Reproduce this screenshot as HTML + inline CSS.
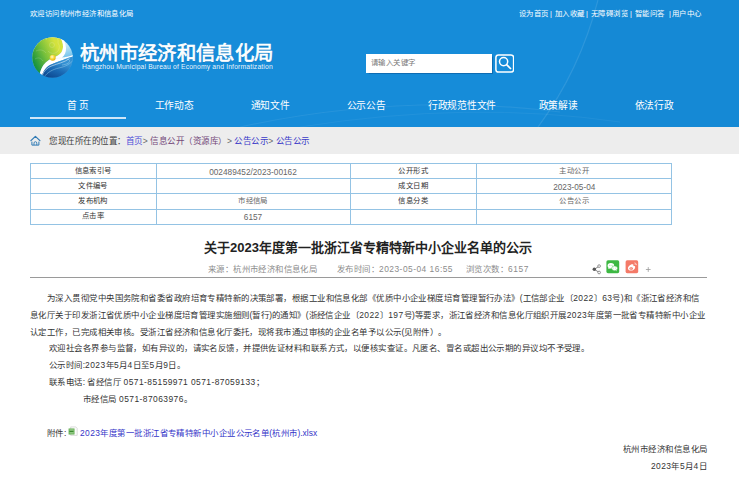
<!DOCTYPE html>
<html lang="zh-CN"><head><meta charset="utf-8">
<style>
*{margin:0;padding:0;box-sizing:border-box}
html,body{width:739px;height:485px;overflow:hidden;background:#fff}
body{position:relative;font-family:"Liberation Sans",sans-serif;color:#333;text-spacing-trim:space-all}
.a{position:absolute}
.t{position:absolute;white-space:nowrap;transform-origin:0 0;transform:scale(var(--k,0.61583))}
.n{letter-spacing:0.05em}
#hd{position:absolute;left:0;top:0;width:739px;height:127px;background:#168cd9;overflow:hidden}
.top{font-size:12px;color:#fff;line-height:16px}
.nav{font-size:16px;color:#fff;line-height:20px;width:calc(96px / var(--k,0.61583));text-align:center;--k:0.607}
#bc{position:absolute;left:0;top:127px;width:739px;height:27px;background:#ededed}
.tb{position:absolute;background:#94c3e4}
.c{font-size:12px;line-height:16px;text-align:center;color:#333}
.v{color:#666}
.d{font-size:13.4px;position:relative;top:2.2px}
.m{top:264px;font-size:14px;line-height:18px;color:#8c8c8c;--k:0.6}
.p{font-size:14px;line-height:20px;color:#333;--k:0.603}
</style></head><body>
<div id="hd">
  <svg class="a" style="left:0;top:0" width="739" height="127">
    <path d="M538 127 Q580 70 598 0" stroke="rgba(255,255,255,0.10)" stroke-width="1.2" fill="none"/>
    <path d="M538 127 Q580 70 598 0 L739 0 L739 127Z" fill="rgba(0,0,0,0.015)"/>
    <path d="M240 127 Q400 92 560 112" stroke="rgba(255,255,255,0.07)" stroke-width="1.2" fill="none"/>
    <path d="M300 127 Q470 100 620 122" stroke="rgba(255,255,255,0.05)" stroke-width="1" fill="none"/>
  </svg>
  <div class="t top" style="left:30px;top:9.3px">欢迎访问杭州市经济和信息化局</div>
  <div class="t top" style="left:518.5px;top:9.3px">设为首页</div>
  <div class="t top" style="left:549.6px;top:9.3px">|</div>
  <div class="t top" style="left:555px;top:9.3px">加入收藏</div>
  <div class="t top" style="left:585.8px;top:9.3px">|</div>
  <div class="t top" style="left:591.2px;top:9.3px">无障碍浏览</div>
  <div class="t top" style="left:629.7px;top:9.3px">|</div>
  <div class="t top" style="left:634.7px;top:9.3px">智能问答</div>
  <div class="t top" style="left:668.6px;top:9.3px">|</div>
  <div class="t top" style="left:672.2px;top:9.3px">用户中心</div>
  <svg class="a" style="left:32px;top:37px" width="41" height="41" viewBox="0 0 41 41">
  <defs>
    <linearGradient id="lg" x1="0.05" y1="0.6" x2="0.75" y2="0.15">
      <stop offset="0" stop-color="#1a9440"/><stop offset="0.5" stop-color="#7cc23c"/><stop offset="1" stop-color="#d4e23e"/>
    </linearGradient>
    <linearGradient id="lb" x1="0.75" y1="0.1" x2="0.9" y2="0.7">
      <stop offset="0" stop-color="#e6f6fc"/><stop offset="0.5" stop-color="#8fd0f0"/><stop offset="1" stop-color="#3d9fe0"/>
    </linearGradient>
    <linearGradient id="ld" x1="0.7" y1="0.3" x2="0.3" y2="1">
      <stop offset="0" stop-color="#3592d4"/><stop offset="0.5" stop-color="#1a6ab4"/><stop offset="1" stop-color="#0d4a92"/>
    </linearGradient>
    <radialGradient id="ly" cx="0.4" cy="0.35" r="0.7">
      <stop offset="0" stop-color="#fffbd8"/><stop offset="0.5" stop-color="#f6d838"/><stop offset="1" stop-color="#e0a812"/>
    </radialGradient>
    <clipPath id="cc"><circle cx="20.5" cy="20.5" r="20.3"/></clipPath>
  </defs>
  <g clip-path="url(#cc)">
    <rect x="0" y="0" width="41" height="41" fill="url(#lb)"/>
    <path d="M0 0 H27 C30 2 31.2 6 31 10 C30.8 14.5 28.5 17.5 24 19.5 C19 21.5 14.5 24 11.5 28 C9.5 31 8.3 34 7.7 37 L7 41 H0Z" fill="url(#lg)"/>
    <path d="M27 0 C30 2 31.2 6 31 10 C30.8 14.5 28.5 17.5 24 19.5 C19 21.5 14.5 24 11.5 28 C9.5 31 8.3 34 7.7 37 L8 41 L9.5 41 C10.5 35 13.5 30.5 18 28 C23 25.3 30 23.5 35 21.2 L41 19.5 L41 18 C37 19.5 33 20.5 30 20.6 C32.8 18.5 34.2 15 34 11 C33.8 6 31.5 2.5 29.5 0Z" fill="#ffffff"/>
    <path d="M9.5 41 C10.5 35 13.5 30.5 18 28 C23 25.3 30 23.5 35 21.2 L41 19.5 V41Z" fill="url(#ld)"/>
    <path d="M10.2 38.5 C12 33.5 15.5 30.5 20 28.8 C26 26.5 32 25.5 37.5 21.5" fill="none" stroke="#ffffff" stroke-width="0.6" opacity="0.85"/>
    <path d="M12 40 C15.5 35.5 20 32.5 27 31 C33 29.7 37.5 27.5 40.5 24" fill="none" stroke="#a8dcf6" stroke-width="0.7" opacity="0.6"/>
    <path d="M24 21.5 C30 20.5 36 21 37.5 23.5 C38.5 25.5 35 27.5 30 28" fill="none" stroke="#d0eefa" stroke-width="0.5" opacity="0.7"/>
    <g fill="none" stroke="#ffffff" stroke-width="0.55" opacity="0.28">
      <path d="M14 3 A6 6 0 0 1 26 6 A6 6 0 0 1 16 14"/>
      <circle cx="20" cy="8" r="2.5"/>
      <path d="M4 14 C8 12 12 13 14 16 M3 22 C6 20 9 21 11 24"/>
    </g>
    <circle cx="20.7" cy="20.8" r="3" fill="url(#ly)"/>
  </g>
</svg>
  <div class="t" style="left:80.3px;top:43px;font-size:31px;line-height:36px;color:#fff;-webkit-text-stroke:1.1px #fff;text-shadow:0 1.5px 1.5px rgba(0,40,90,0.25);--k:0.623">杭州市经济和信息化局</div>
  <div class="t" style="left:82px;top:62.5px;font-size:11px;line-height:12px;color:rgba(255,255,255,0.92);letter-spacing:0.25px">Hangzhou Municipal Bureau of Economy and Informatization</div>
  <div class="a" style="left:365.5px;top:53.5px;width:126.5px;height:19.2px;background:#fff;box-shadow:0.5px 0.5px 1px rgba(0,50,110,0.35)"></div>
  <div class="t" style="left:371px;top:57.5px;font-size:12px;line-height:16px;color:#777">请输入关键字</div>
  <svg class="a" style="left:494.5px;top:54px" width="19.5" height="19" viewBox="0 0 19.5 19">
    <rect x="0.9" y="0.9" width="17.7" height="17.2" rx="2.6" fill="none" stroke="#fff" stroke-width="1.5"/>
    <circle cx="8.6" cy="7.6" r="4.1" fill="none" stroke="#fff" stroke-width="1.5"/>
    <path d="M11.6 10.6 L16 15" stroke="#fff" stroke-width="1.7"/>
  </svg>
  <div class="t nav" style="left:30px;top:99.8px">首&nbsp;页</div>
  <div class="t nav" style="left:126px;top:99.8px">工作动态</div>
  <div class="t nav" style="left:222px;top:99.8px">通知文件</div>
  <div class="t nav" style="left:318px;top:99.8px">公示公告</div>
  <div class="t nav" style="left:414px;top:99.8px">行政规范性文件</div>
  <div class="t nav" style="left:510px;top:99.8px">政策解读</div>
  <div class="t nav" style="left:606px;top:99.8px">依法行政</div>
  <div class="a" style="left:30px;top:117px;width:96px;height:2px;background:#cfe6f8"></div>
</div>
<div id="bc">
  <svg class="a" style="left:29.5px;top:8px" width="11" height="11" viewBox="0 0 11 11">
    <path d="M0.9 5.6 L5.4 1.4 L9.9 5.6" fill="none" stroke="#2f7ab4" stroke-width="1.25" stroke-linecap="round" stroke-linejoin="round"/>
    <path d="M1.9 6.6 V10.1 H8.9 V6.6" fill="none" stroke="#2f7ab4" stroke-width="1"/>
    <path d="M4 10.1 V8.1 A1.4 1.4 0 0 1 6.8 8.1 V10.1" fill="none" stroke="#2f7ab4" stroke-width="0.9"/>
  </svg>
  <div class="t" style="left:48.5px;top:7.8px;font-size:14px;line-height:20px;color:#404040;--k:0.609">您现在所在的位置：<span style="color:#4b4bd8">首页</span><span style="color:#666">&gt;</span> <span style="color:#74497a">信息公开（资源库）</span><span style="color:#666">&gt;</span> <span style="color:#3a3ac8">公告公示</span><span style="color:#666">&gt;</span> <span style="color:#3a3ac8">公告公示</span></div>
</div>
<!-- table lines -->
<div class="tb" style="left:30px;top:163px;width:641px;height:1px"></div>
<div class="tb" style="left:30px;top:178.2px;width:641px;height:1px"></div>
<div class="tb" style="left:30px;top:193.2px;width:641px;height:1px"></div>
<div class="tb" style="left:30px;top:208.7px;width:641px;height:1px"></div>
<div class="tb" style="left:30px;top:224px;width:641.6px;height:1px"></div>
<div class="tb" style="left:30px;top:163px;width:1px;height:62px"></div>
<div class="tb" style="left:156px;top:163px;width:1px;height:62px"></div>
<div class="tb" style="left:350px;top:163px;width:1px;height:62px"></div>
<div class="tb" style="left:476.2px;top:163px;width:1px;height:62px"></div>
<div class="tb" style="left:670.6px;top:163px;width:1px;height:62px"></div>
<div class="t c" style="left:30px;top:165.5px;width:calc(126px / var(--k,0.61583))">信息索引号</div>
<div class="t c v" style="left:156px;top:165.5px;width:calc(194px / var(--k,0.61583))"><span class="d">002489452/2023-00162</span></div>
<div class="t c" style="left:350px;top:165.5px;width:calc(126.5px / var(--k,0.61583))">公开形式</div>
<div class="t c v" style="left:476.5px;top:165.5px;width:calc(194.5px / var(--k,0.61583))">主动公开</div>
<div class="t c" style="left:30px;top:180.8px;width:calc(126px / var(--k,0.61583))">文件编号</div>
<div class="t c" style="left:350px;top:180.8px;width:calc(126.5px / var(--k,0.61583))">成文日期</div>
<div class="t c v" style="left:476.5px;top:180.8px;width:calc(194.5px / var(--k,0.61583))"><span class="d">2023-05-04</span></div>
<div class="t c" style="left:30px;top:196.1px;width:calc(126px / var(--k,0.61583))">发布机构</div>
<div class="t c v" style="left:156px;top:196.1px;width:calc(194px / var(--k,0.61583))">市经信局</div>
<div class="t c" style="left:350px;top:196.1px;width:calc(126.5px / var(--k,0.61583))">信息分类</div>
<div class="t c v" style="left:476.5px;top:196.1px;width:calc(194.5px / var(--k,0.61583))">公告公示</div>
<div class="t c" style="left:30px;top:211.4px;width:calc(126px / var(--k,0.61583))">点击率</div>
<div class="t c v" style="left:156px;top:211.4px;width:calc(194px / var(--k,0.61583))"><span class="d">6157</span></div>

<div class="t" style="left:204px;top:240px;font-size:21px;line-height:24px;font-weight:bold;color:#222;--k:0.62">关于2023年度第一批浙江省专精特新中小企业名单的公示</div>
<div class="t m" style="left:207.5px">来源：杭州市经济和信息化局</div>
<div class="t m" style="left:337px">发布时间：<span style="letter-spacing:0.8px">2023-05-04 16:55</span></div>
<div class="t m" style="left:465.8px">浏览次数：<span style="letter-spacing:0.9px">6157</span></div>
<svg class="a" style="left:592px;top:259px" width="62" height="16" viewBox="0 0 62 16">
  <g stroke="#666" stroke-width="0.8" fill="none"><path d="M2.3 10.3 L7 7.3 M2.3 10.3 L7 13.3"/></g>
  <circle cx="2.3" cy="10.3" r="1.7" fill="#555"/>
  <circle cx="7.1" cy="7.1" r="1.35" fill="#fff" stroke="#777" stroke-width="0.8"/>
  <circle cx="7.1" cy="13.5" r="1.35" fill="#fff" stroke="#777" stroke-width="0.8"/>
  <rect x="14.4" y="1.3" width="12.8" height="12.9" rx="1.6" fill="#3db843"/>
  <ellipse cx="18.9" cy="6.8" rx="3.3" ry="2.8" fill="#fff"/>
  <path d="M16.6 8.6 L16.1 10 L17.8 9.2Z" fill="#fff"/>
  <ellipse cx="22.6" cy="9.3" rx="2.9" ry="2.4" fill="#fff" stroke="#3db843" stroke-width="0.5"/>
  <path d="M24.4 11.2 L25 12.3 L23.6 11.6Z" fill="#fff"/>
  <circle cx="17.9" cy="6.3" r="0.45" fill="#3db843"/><circle cx="20" cy="6.3" r="0.45" fill="#3db843"/>
  <circle cx="21.7" cy="9" r="0.35" fill="#3db843"/><circle cx="23.5" cy="9" r="0.35" fill="#3db843"/>
  <rect x="33.6" y="1.3" width="12.6" height="12.9" rx="1.6" fill="#f47a68"/>
  <path d="M36 9.8 C35.6 7.6 38.5 5 40.6 5.2 C41.8 5.3 41.6 6.5 41.3 7 C42.3 6.8 43.4 7 43.2 8.2 C43 10.5 40.5 11.8 38.6 11.6 C37.2 11.5 36.2 10.9 36 9.8Z" fill="#fff"/>
  <ellipse cx="39.2" cy="9.6" rx="1.8" ry="1.3" fill="#f47a68"/>
  <circle cx="39" cy="9.8" r="0.6" fill="#fff"/>
  <path d="M42.5 3.8 A2.6 2.6 0 0 1 44.6 6.2 M42.6 5 A1.3 1.3 0 0 1 43.5 6" stroke="#fff" stroke-width="0.6" fill="none"/>
  <path d="M53.9 10.5 H58.6 M56.25 8.1 V12.9" stroke="#9a9a9a" stroke-width="0.8"/>
</svg>
<div class="a" style="left:30px;top:276.8px;width:677px;height:1px;background:#9a9a9a"></div>
<div class="t p" style="left:47.2px;top:291.7px">为深入贯彻党中央国务院和省委省政府培育专精特新的决策部署，根据工业和信息化部《优质中小企业梯度培育管理暂行办法》(工信部企业〔<span class="n">2022</span>〕<span class="n">63</span>号)和《浙江省经济和信</div>
<div class="t p" style="left:30.2px;top:308.6px">息化厅关于印发浙江省优质中小企业梯度培育管理实施细则(暂行)的通知》(浙经信企业〔<span class="n">2022</span>〕<span class="n">197</span>号)等要求，浙江省经济和信息化厅组织开展<span class="n">2023</span>年度第一批省专精特新中小企业</div>
<div class="t p" style="left:30.2px;top:325.5px">认定工作，已完成相关审核。受浙江省经济和信息化厅委托，现将我市通过审核的企业名单予以公示(见附件）。</div>
<div class="t p" style="left:49px;top:342.4px">欢迎社会各界参与监督，如有异议的，请实名反馈，并提供佐证材料和联系方式，以便核实查证。凡匿名、冒名或超出公示期的异议均不予受理。</div>
<div class="t p" style="left:49px;top:359.3px">公示时间:<span class="n">2023</span>年<span class="n">5</span>月<span class="n">4</span>日至<span class="n">5</span>月<span class="n">9</span>日。</div>
<div class="t p" style="left:49px;top:376.2px">联系电话: 省经信厅 <span class="n">0571-85159971 0571-87059133</span>；</div>
<div class="t p" style="left:83px;top:393.1px">市经信局 <span class="n">0571-87063976</span>。</div>
<div class="t p" style="left:46.5px;top:427px">附件:</div>
<svg class="a" style="left:67.5px;top:425.5px" width="10" height="10" viewBox="0 0 10 10">
  <path d="M2.7 0.9 H7.8 L9.2 2.3 V9.4 H2.7Z" fill="#fbfbfb" stroke="#c8c8c8" stroke-width="0.6"/>
  <rect x="0.6" y="2.5" width="5.9" height="6" fill="#5caa4c"/>
  <path d="M1.4 4 H5.8 M1.4 6.9 H5.8" stroke="#d8f0d0" stroke-width="0.7"/>
  <path d="M1.8 5.4 H5" stroke="#2e7a26" stroke-width="0.8"/>
</svg>
<div class="t p" style="left:80px;top:427px;color:#3434c8"><span class="n">2023</span>年度第一批浙江省专精特新中小企业公示名单(杭州市).xlsx</div>
<div class="t p" style="left:622.5px;top:442.9px">杭州市经济和信息化局</div>
<div class="t p" style="left:650.5px;top:459.7px"><span class="n">2023</span>年<span class="n">5</span>月<span class="n">4</span>日</div>
</body></html>
